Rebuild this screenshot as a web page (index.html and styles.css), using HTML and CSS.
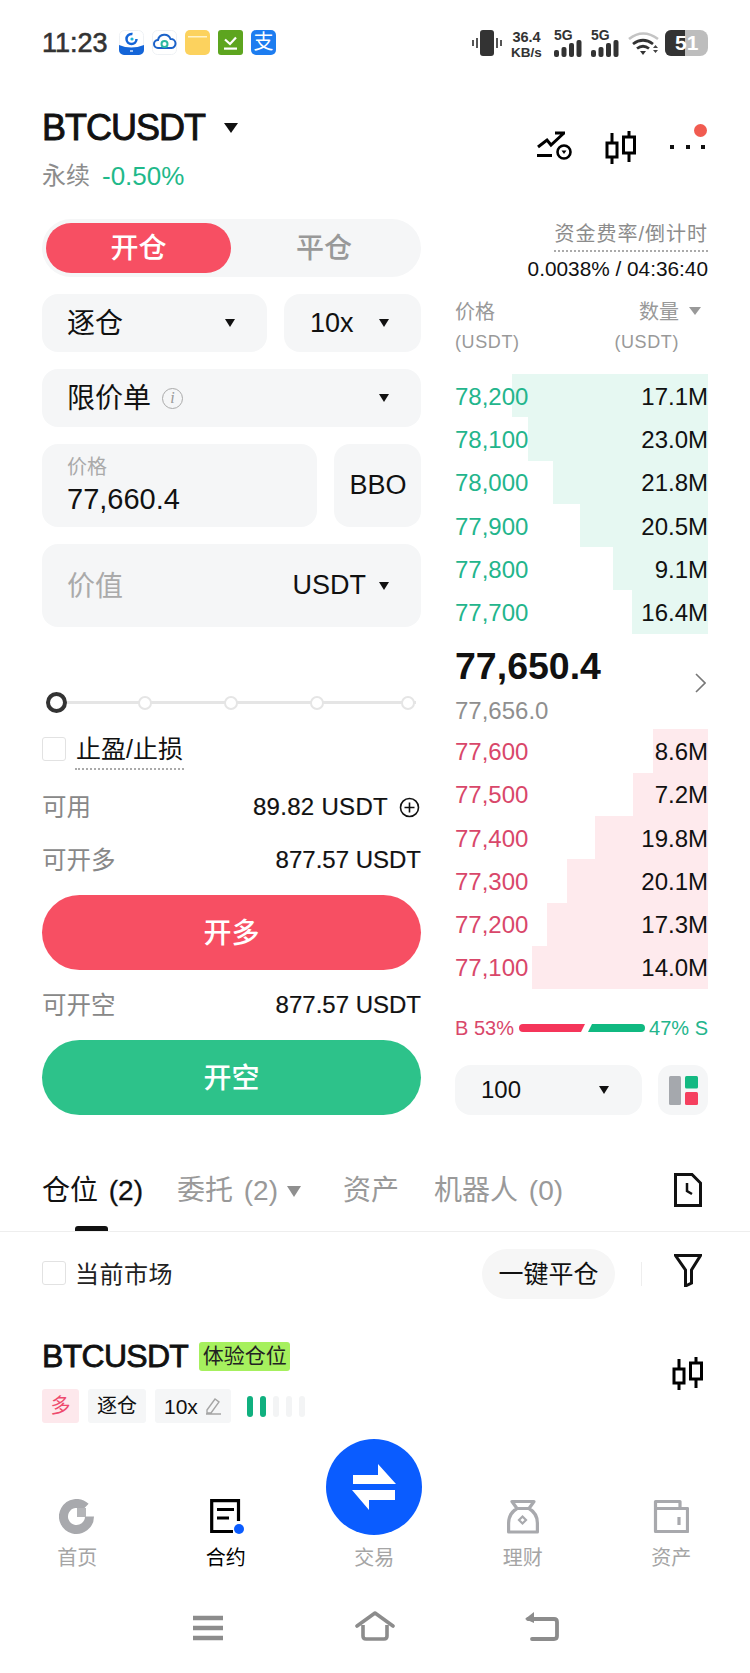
FILE: index.html
```html
<!DOCTYPE html>
<html lang="zh-CN">
<head>
<meta charset="utf-8">
<title>BTCUSDT</title>
<link rel="stylesheet" href="styles.css">
</head>
<body>
<div class="page">
  <div class="status">
    <span class="time">11:23</span>
    <div class="apps">
      <span class="app"><svg viewBox="0 0 25 25" width="25" height="25"><rect x=".5" y=".5" width="24" height="24" rx="5" fill="#fff" stroke="#eef1f4"/><path d="M0 15q12 5 25 0v5a5 5 0 0 1-5 5H5a5 5 0 0 1-5-5z" fill="#1465d8"/><circle cx="12.500" cy="9" r="5" fill="none" stroke="#1465d8" stroke-width="2.500" stroke-dasharray="24 8"/><circle cx="13" cy="9" r="1.600" fill="#1fb6d8"/><path d="M11 21h3" stroke="#cfe0fa" stroke-width="1.500"/></svg></span>
      <span class="app"><svg viewBox="0 0 25 25" width="25" height="25"><rect x=".5" y=".5" width="24" height="24" rx="5" fill="#fff" stroke="#eef1f4"/><path d="M6 18a4 4 0 0 1 0-8 6.500 6.500 0 0 1 12.500-1 4.500 4.500 0 0 1 1 9z" fill="none" stroke="#1b62c9" stroke-width="2"/><circle cx="12.500" cy="14" r="3" fill="none" stroke="#2cb9a0" stroke-width="2"/></svg></span>
      <span class="app"><svg viewBox="0 0 25 25" width="25" height="25"><rect width="25" height="25" rx="5" fill="#fcd25e"/><rect x="3" y="6" width="19" height="1.500" fill="#fff3c9"/></svg></span>
      <span class="app"><svg viewBox="0 0 25 25" width="25" height="25"><rect width="25" height="25" rx="3" fill="#5da51f"/><path d="M7 9.500l5 4.500 6-6.500" fill="none" stroke="#fff" stroke-width="2.200"/><rect x="6" y="17.500" width="13" height="2.200" fill="#fff"/></svg></span>
      <span class="app app-pay">支</span>
    </div>
    <div class="sys">
      <svg class="vib" viewBox="0 0 30 26" width="30" height="26"><rect x="8" width="14" height="26" rx="3" fill="#333"/><path d="M5 8v10M1 10v6M25 8v10M29 10v6" stroke="#555" stroke-width="2"/></svg>
      <div class="speed"><b>36.4</b><b class="unit">KB/s</b></div>
      <div class="sim"><b>5G</b><svg viewBox="0 0 28 17" width="28" height="17"><rect y="10" width="5" height="7" rx="2" fill="#333"/><rect x="7.500" y="7" width="5" height="10" rx="2" fill="#333"/><rect x="15" y="3" width="5" height="14" rx="2" fill="#333"/><rect x="22.500" width="5" height="17" rx="2" fill="#333"/></svg></div>
      <div class="sim"><b>5G</b><svg viewBox="0 0 28 17" width="28" height="17"><rect y="10" width="5" height="7" rx="2" fill="#333"/><rect x="7.500" y="7" width="5" height="10" rx="2" fill="#333"/><rect x="15" y="3" width="5" height="14" rx="2" fill="#333"/><rect x="22.500" width="5" height="17" rx="2" fill="#333"/></svg></div>
      <svg class="wifi" viewBox="0 0 31 26" width="31" height="26"><path d="M1 9q14-11 29 0" fill="none" stroke="#c4c4c4" stroke-width="2.600"/><path d="M5 14q10-7.500 20 0M9 18.500q6-4.500 12 0" fill="none" stroke="#333" stroke-width="2.800"/><path d="M12 21h6l-3 4z" fill="#333"/><path d="M25 18l2.500-3 2.500 3zM25 20l2.500 3 2.500-3z" fill="#444"/></svg>
      <div class="battery"><span class="batt-fill"></span><span class="batt-num">51</span></div>
    </div>
  </div>

  <header class="head">
    <div>
      <div class="symbol"><h1>BTCUSDT</h1><i class="caret caret-lg"></i></div>
      <div class="sub"><span class="perp">永续</span><span class="chg">-0.50%</span></div>
    </div>
    <div class="head-icons">
      <svg viewBox="0 0 35 30" width="35" height="30"><path d="M1 16l9-7 4 5L27 2M18 2h10" fill="none" stroke="#000" stroke-width="3"/><path d="M0 24.500h15" stroke="#000" stroke-width="3"/><circle cx="27" cy="21" r="6.500" fill="#fff" stroke="#000" stroke-width="2.600"/><path d="M24.500 19.500h5L27 23z" fill="#000"/></svg>
      <svg viewBox="0 0 32 34" width="32" height="34"><path d="M7 2v10M7 26v7M24 0v6M24 22v9" stroke="#000" stroke-width="3"/><rect x="2" y="12" width="10" height="14" fill="none" stroke="#000" stroke-width="3"/><rect x="18.500" y="6" width="11" height="16" fill="none" stroke="#000" stroke-width="3"/></svg>
      <div class="more"><i></i><i></i><i></i><span class="dot"></span></div>
    </div>
  </header>

  <main class="trade">
    <section class="form">
      <div class="toggle"><span class="tg on">开仓</span><span class="tg">平仓</span></div>
      <div class="split">
        <div class="field grow"><span class="cn">逐仓</span><i class="caret"></i></div>
        <div class="field lev"><span class="en">10x</span><i class="caret"></i></div>
      </div>
      <div class="field"><span class="with-info"><span class="cn">限价单</span><em class="info">i</em></span><i class="caret"></i></div>
      <div class="split">
        <div class="field tall price grow"><small>价格</small><span class="en val">77,660.4</span></div>
        <div class="field tall bbo"><span class="en">BBO</span></div>
      </div>
      <div class="field tall"><span class="ph cn">价值</span><span class="unit-sel"><span class="en">USDT</span><i class="caret"></i></span></div>

      <div class="slider">
        <i class="knob"></i><i class="stop"></i><i class="stop"></i><i class="stop"></i><i class="stop stop-end"></i>
      </div>
      <label class="tp"><i class="check"></i><span class="dotted">止盈/止损</span></label>
      <div class="line l1"><span>可用</span><b class="avail">89.82&nbsp;USDT<svg viewBox="0 0 21 21" width="21" height="21"><circle cx="10.500" cy="10.500" r="9" fill="none" stroke="#111" stroke-width="1.600"/><path d="M5.500 10.500h10M10.500 5.500v10" stroke="#111" stroke-width="1.600"/></svg></b></div>
      <div class="line l2"><span>可开多</span><b>877.57 USDT</b></div>
      <button class="cta long">开多</button>
      <div class="line l3"><span>可开空</span><b>877.57 USDT</b></div>
      <button class="cta short">开空</button>
    </section>

    <section class="book">
      <div class="fund"><span class="dotted fund-l">资金费率/倒计时</span></div>
      <div class="fund-v">0.0038% / 04:36:40</div>
      <div class="book-head">
        <div><div>价格</div><div class="usd">(USDT)</div></div>
        <div class="right"><div>数量<i class="caret caret-grey"></i></div><div class="usd usd2">(USDT)</div></div>
      </div>
      <div class="rows asks">
        <div class="row"><i class="bar" style="width:196px"></i><span class="p">78,200</span><span class="q">17.1M</span></div>
        <div class="row"><i class="bar" style="width:180px"></i><span class="p">78,100</span><span class="q">23.0M</span></div>
        <div class="row"><i class="bar" style="width:155px"></i><span class="p">78,000</span><span class="q">21.8M</span></div>
        <div class="row"><i class="bar" style="width:128px"></i><span class="p">77,900</span><span class="q">20.5M</span></div>
        <div class="row"><i class="bar" style="width:95px"></i><span class="p">77,800</span><span class="q">9.1M</span></div>
        <div class="row"><i class="bar" style="width:76px"></i><span class="p">77,700</span><span class="q">16.4M</span></div>
      </div>
      <div class="mid">
        <div class="last">77,650.4</div>
        <div class="mark">77,656.0</div>
        <svg class="chev" viewBox="0 0 11 20" width="11" height="20"><path d="M1 1l9 9-9 9" fill="none" stroke="#777" stroke-width="1.600"/></svg>
      </div>
      <div class="rows bids">
        <div class="row"><i class="bar" style="width:55px"></i><span class="p">77,600</span><span class="q">8.6M</span></div>
        <div class="row"><i class="bar" style="width:75px"></i><span class="p">77,500</span><span class="q">7.2M</span></div>
        <div class="row"><i class="bar" style="width:113px"></i><span class="p">77,400</span><span class="q">19.8M</span></div>
        <div class="row"><i class="bar" style="width:141px"></i><span class="p">77,300</span><span class="q">20.1M</span></div>
        <div class="row"><i class="bar" style="width:161px"></i><span class="p">77,200</span><span class="q">17.3M</span></div>
        <div class="row"><i class="bar" style="width:176px"></i><span class="p">77,100</span><span class="q">14.0M</span></div>
      </div>
      <div class="ratio">
        <span class="rb">B 53%</span>
        <svg viewBox="0 0 126 8" width="126" height="8"><path d="M4 0H66L62 8H4a4 4 0 0 1 0-8z" fill="#f5355a"/><path d="M73 0H122a4 4 0 0 1 0 8H69z" fill="#10b981"/></svg>
        <span class="rs">47% S</span>
      </div>
      <div class="book-foot">
        <div class="depth"><span class="en">100</span><i class="caret"></i></div>
        <div class="layout"><svg viewBox="0 0 29 29" width="29" height="29"><rect width="12" height="29" rx="1.500" fill="#a5a8ad"/><rect x="16" width="13" height="12.500" rx="1.500" fill="#14b982"/><rect x="16" y="16" width="13" height="13" rx="1.500" fill="#f5405f"/></svg></div>
      </div>
    </section>
  </main>

  <nav class="tabs">
    <span class="tab on">仓位 <b>(2)</b></span>
    <span class="tab">委托 (2)<i class="tri"></i></span>
    <span class="tab t3">资产</span>
    <span class="tab t4">机器人 (0)</span>
    <svg class="doc" viewBox="0 0 28 34" width="28" height="34"><path d="M1.500 1.500H18l8.500 8.500v22.500h-25z" fill="none" stroke="#111" stroke-width="3"/><path d="M13 10v8l5 3" fill="none" stroke="#111" stroke-width="2.500"/></svg>
  </nav>

  <div class="filter">
    <label class="cur"><i class="check"></i><span>当前市场</span></label>
    <button class="close-all">一键平仓</button>
    <i class="vline"></i>
    <svg class="funnel" viewBox="0 0 28 33" width="28" height="33"><path d="M1.500 1.500h25L17.500 16v13l-6 3V16z" fill="none" stroke="#111" stroke-width="3"/></svg>
  </div>

  <section class="pos">
    <div>
      <div class="pos-top"><h2>BTCUSDT</h2><span class="badge">体验仓位</span></div>
      <div class="tags">
        <span class="tag red">多</span>
        <span class="tag">逐仓</span>
        <span class="tag lev-tag"><span class="en">10x</span><svg viewBox="0 0 18 18" width="18" height="18"><path d="M2 17h15M3 13l8-11 4 3-8 11H3z" fill="none" stroke="#a5a5a5" stroke-width="1.400"/></svg></span>
        <span class="meter"><i class="g"></i><i class="g"></i><i></i><i></i><i></i></span>
      </div>
    </div>
    <svg class="pos-candle" viewBox="0 0 32 34" width="32" height="34"><path d="M7 2v10M7 26v7M24 0v6M24 22v9" stroke="#000" stroke-width="3"/><rect x="2" y="12" width="10" height="14" fill="none" stroke="#000" stroke-width="3"/><rect x="18.500" y="6" width="11" height="16" fill="none" stroke="#000" stroke-width="3"/></svg>
  </section>

  <nav class="tabbar">
    <div class="item">
      <svg viewBox="0 0 36 36" width="36" height="36"><path d="M26.500 8.100A13 13 0 1 0 30.500 17.500" fill="none" stroke="#a8a9ad" stroke-width="9"/><rect x="18" y="9" width="9" height="9" fill="#b4b5b8"/></svg>
      <span>首页</span>
    </div>
    <div class="item act">
      <svg viewBox="0 0 36 36" width="36" height="36"><path d="M30.500 22V1.700H3.700V32.500H25" fill="none" stroke="#000" stroke-width="3.200"/><path d="M9 10.500H26M9 19H21" stroke="#000" stroke-width="3"/><circle cx="31" cy="30" r="5" fill="#0a5cff"/></svg>
      <span>合约</span>
    </div>
    <div class="item trade-item">
      <div class="fab"><svg viewBox="0 0 46 48" width="46" height="48"><path d="M2 12H27V1L45 21H2z" fill="#fff"/><path d="M44 27V37H18V47L1 27z" fill="#fff"/></svg></div>
      <i class="spacer"></i>
      <span>交易</span>
    </div>
    <div class="item">
      <svg viewBox="0 0 36 36" width="36" height="36"><path d="M7 2.500H29L24 9.500H12zM12 9.500C6 13 3.600 18 3.600 24V33H32.400V24C32.400 18 30 13 24 9.500" fill="none" stroke="#a8a9ad" stroke-width="3.200" stroke-linejoin="round"/><path d="M17.500 17.500L21 21l-3.500 3.500L14 21z" fill="none" stroke="#a8a9ad" stroke-width="2.200"/></svg>
      <span>理财</span>
    </div>
    <div class="item">
      <svg viewBox="0 0 36 36" width="36" height="36"><path d="M2.500 32.500V2.500H27V9.500H34.500V32.500zM2.500 9.500H27" fill="none" stroke="#a8a9ad" stroke-width="3.200" stroke-linejoin="round"/><path d="M26 18v8" stroke="#a8a9ad" stroke-width="3.200"/></svg>
      <span>资产</span>
    </div>
  </nav>

  <div class="sysnav">
    <svg viewBox="0 0 32 26" width="32" height="26"><path d="M1 3h30M1 13h30M1 23h30" stroke="#8c8c8c" stroke-width="4.500"/></svg>
    <svg viewBox="0 0 40 30" width="40" height="30"><path d="M2 15L20 2l18 13" fill="none" stroke="#8c8c8c" stroke-width="3.600" stroke-linecap="round" stroke-linejoin="round"/><path d="M8 14v11q0 3 3 3h18q3 0 3-3V14" fill="none" stroke="#8c8c8c" stroke-width="3.600"/></svg>
    <svg viewBox="0 0 36 30" width="36" height="30"><path d="M4 8h26q3 0 3 3v14q0 3-3 3H8" fill="none" stroke="#8c8c8c" stroke-width="3.800" stroke-linecap="round"/><path d="M10 1L1 8l9 4z" fill="#8c8c8c"/></svg>
  </div>
</div>
</body>
</html>
```
FILE: styles.css
```css
* { box-sizing: border-box; }
html, body { margin: 0; padding: 0; background: #fff; }
body { font-family: "Liberation Sans", "Noto Sans CJK SC", sans-serif; color: #111; }
i, em { font-style: normal; }
.page { width: 750px; height: 1673px; overflow: hidden; display: flex; flex-direction: column; }
.en { font-size: 27px; }
.cn { padding-bottom: 4px; }

.status { height: 85px; padding: 30px 42px 0; display: flex; align-items: flex-start; }
.time { font-size: 27px; line-height: 26px; font-weight: 400; -webkit-text-stroke: .6px #333; color: #333; width: 77px; }
.apps { display: flex; gap: 8px; }
.app { width: 25px; height: 25px; display: block; }
.app svg { display: block; }
.app-pay { background: #1d7df0; border-radius: 5px; color: #fff; font-size: 20px; line-height: 25px; text-align: center; }
.sys { margin-left: auto; display: flex; align-items: flex-start; color: #333; }
.vib { margin-right: 8px; }
.speed { width: 33px; margin-right: 11px; display: flex; flex-direction: column; align-items: center; font-size: 14.500px; line-height: 14px; }
.speed .unit { font-size: 13.500px; margin-top: 2px; }
.sim { width: 28px; margin-right: 9px; font-size: 14px; line-height: 10px; }
.sim b { display: block; }
.sim svg { display: block; }
.wifi { margin-right: 6px; }
.battery { position: relative; width: 43px; height: 26px; background: #bdbdbd; border-radius: 6px 8px 8px 6px; overflow: hidden; }
.batt-fill { display: block; width: 20px; height: 26px; background: #333; }
.batt-num { position: absolute; left: 10px; top: 0; line-height: 26px; color: #fff; font-weight: 700; font-size: 21px; }

.head { height: 134px; padding: 0 45px 0 42px; display: flex; justify-content: space-between; }
.symbol { display: flex; align-items: center; height: 40px; margin-top: 23px; }
.symbol h1 { margin: 0; font-size: 36px; line-height: 40px; font-weight: 400; letter-spacing: -1px; -webkit-text-stroke: .9px #111; }
.caret { display: block; width: 0; height: 0; border-left: 5.500px solid transparent; border-right: 5.500px solid transparent; border-top: 8px solid #111; flex: none; }
.caret-lg { border-left-width: 7px; border-right-width: 7px; border-top-width: 10px; margin-left: 19px; }
.sub { margin-top: 13px; line-height: 30px; font-size: 24px; display: flex; gap: 12px; }
.perp { color: #8c8c8c; }
.chg { color: #1fb98a; font-size: 26px; }
.head-icons { margin-top: 46px; display: flex; gap: 33px; align-items: flex-start; height: 34px; }
.head-icons svg { display: block; }
.more { position: relative; width: 35px; height: 34px; display: flex; justify-content: space-between; padding-top: 14px; }
.more i { width: 4px; height: 4px; background: #111; }
.dot { position: absolute; right: -1.500px; top: -7.500px; width: 13px; height: 13px; border-radius: 50%; background: #f15b50; }

.trade { height: 896px; padding: 0 42px; display: flex; justify-content: space-between; }
.form { width: 379px; display: flex; flex-direction: column; }
.toggle { height: 58px; border-radius: 29px; background: #f5f6f7; padding: 4px; display: flex; font-size: 28px; font-weight: 500; color: #999; }
.tg { flex: 1; text-align: center; line-height: 52px; }
.tg.on { flex: none; width: 185px; background: #f74f63; color: #fff; border-radius: 25px; }
.split { display: flex; gap: 17px; margin-top: 17px; }
.field { min-height: 58px; margin-top: 17px; padding: 0 32px 0 25px; background: #f5f6f7; border-radius: 16px; display: flex; align-items: center; justify-content: space-between; font-size: 28px; }
.split .field { margin-top: 0; }
.grow { flex: 1; }
.lev { width: 137px; padding-left: 26px; }
.tall { min-height: 83px; }
.price { flex-direction: column; align-items: flex-start; justify-content: flex-start; padding-top: 10px; }
.price small { font-size: 20px; line-height: 26px; color: #aaa; }
.price .val { font-size: 29px; line-height: 34px; margin-top: 2px; }
.bbo { width: 87px; padding: 0 0 0 1px; justify-content: center; }
.with-info { display: flex; align-items: center; }
.info { margin-left: 11px; width: 21px; height: 21px; border: 1.600px solid #aaa; border-radius: 50%; font: italic 16px/18px "Liberation Serif", serif; color: #999; text-align: center; }
.ph { color: #aaa; }
.unit-sel { display: flex; align-items: center; gap: 13px; }

.slider { margin-top: 65px; height: 21px; margin-left: 4px; width: 370px; display: flex; align-items: center; gap: 72px; background: linear-gradient(#e5e5e5, #e5e5e5) center / 100% 3px no-repeat; }
.knob { width: 21px; height: 21px; margin-right: -1px; border: 4px solid #333; border-radius: 50%; background: #fff; }
.stop { width: 14px; height: 14px; border: 2px solid #e5e5e5; border-radius: 50%; background: #fff; }
.stop-end { margin-left: 5px; }
.tp { margin-top: 24px; height: 33px; display: flex; align-items: flex-start; gap: 9px; font-size: 25px; line-height: 24px; }
.check { display: block; width: 24px; height: 24px; border: 1.500px solid #e2e2e2; border-radius: 3px; background: #fff; flex: none; }
.dotted { border-bottom: 2px dotted #999; }
.tp .dotted { display: block; height: 33px; padding: 0 1px; border-bottom-color: #aaa; }
.line { display: flex; justify-content: space-between; align-items: center; height: 30px; font-size: 24.500px; color: #888; }
.line > span { padding-bottom: 4px; }
.line b { font-size: 24px; font-weight: 400; color: #111; display: flex; align-items: center; -webkit-text-stroke: .2px #111; }
.avail { letter-spacing: .3px; }
.line svg { margin-left: 11px; margin-right: 1px; }
.l1 { margin-top: 22px; }
.l2 { margin-top: 23px; }
.l3 { margin-top: 20px; }
.cta { display: block; width: 379px; height: 75px; margin-top: 20px; border: 0; padding: 0 0 4px; border-radius: 38px; color: #fff; font: 500 28px "Noto Sans CJK SC", sans-serif; }
.long { background: #f74f63; }
.short { background: #2dc28a; }

.book { width: 253px; display: flex; flex-direction: column; }
.fund { display: flex; justify-content: flex-end; height: 33px; }
.fund-l { display: block; height: 33px; font-size: 20px; line-height: 30px; letter-spacing: 1px; color: #8c8c8c; border-bottom-color: #aaa; }
.fund-v { margin-top: 2px; height: 30px; text-align: right; font-size: 20.800px; line-height: 30px; }
.book-head { height: 62px; margin-top: 12px; display: flex; justify-content: space-between; font-size: 20px; line-height: 31px; color: #999; }
.book-head > div > div:first-child { padding-top: 1px; height: 31px; }
.right { display: flex; flex-direction: column; align-items: flex-end; padding-right: 29px; position: relative; }
.right div:first-child { white-space: nowrap; }
.usd { font-size: 18px; letter-spacing: .6px; }
.caret-grey { position: absolute; right: 7px; top: 11px; border-left-width: 6px; border-right-width: 6px; border-top-color: #999; }
.asks { margin-top: 16px; }
.row { position: relative; height: 43.300px; padding-top: 2px; display: flex; justify-content: space-between; align-items: center; font-size: 24px; }
.bar { position: absolute; right: 0; top: 0; bottom: 0; }
.asks .bar { background: #e6f8f2; }
.bids .bar { background: #feeaed; }
.p, .q { position: relative; }
.asks .p { color: #23b58c; }
.bids .p { color: #d9476a; }
.mid { position: relative; height: 96px; }
.last { font-size: 37.500px; font-weight: 700; line-height: 42px; margin-top: 11px; }
.mark { font-size: 24px; line-height: 30px; margin-top: 9px; color: #8f8f8f; }
.chev { position: absolute; right: 2px; top: 39px; }
.ratio { margin-top: 24px; height: 30px; display: flex; align-items: center; justify-content: space-between; font-size: 20px; }
.rb { color: #d9476a; }
.rs { color: #23b58c; }
.book-foot { margin-top: 22px; display: flex; justify-content: space-between; }
.depth { width: 187px; height: 50px; border-radius: 16px; background: #f5f6f7; padding: 0 33px 0 26px; display: flex; align-items: center; justify-content: space-between; }
.depth .en { font-size: 24px; }
.layout { width: 50px; height: 50px; border-radius: 14px; background: #f5f6f7; display: flex; align-items: center; justify-content: center; }
.layout svg { display: block; }

.tabs { position: relative; height: 117px; padding: 61px 42px 0; border-bottom: 1px solid #eee; display: flex; gap: 34px; align-items: flex-start; font-size: 28px; line-height: 30px; word-spacing: 3px; color: #999; }
.tab { display: flex; gap: 7px; align-items: center; white-space: pre; }
.tab b { font-weight: 500; }
.tab.on { color: #111; gap: 0; }
.tab.on::after { content: ""; position: absolute; left: 75px; bottom: 0; width: 33px; height: 5px; border-radius: 3px 3px 0 0; background: #111; }
.tab.on b { -webkit-text-stroke: .3px #111; }
.tab:not(.on):nth-child(2) { gap: 9px; }
.tri { display: block; width: 0; height: 0; border-left: 7.500px solid transparent; border-right: 7.500px solid transparent; border-top: 11px solid #8f8f8f; }
.t3 { margin-left: 8px; }
.t4 { margin-left: 1px; }
.doc { position: absolute; right: 48px; top: 58px; }

.filter { height: 84px; padding: 0 48px 0 42px; display: flex; align-items: center; }
.cur { display: flex; align-items: center; gap: 9px; font-size: 24px; letter-spacing: .5px; color: #222; margin-top: -2px; }
.cur span { padding-bottom: 2px; }
.close-all { margin-left: auto; width: 133px; height: 50px; border: 0; padding: 0 0 4px; border-radius: 25px; background: #f6f6f6; font: 400 25px "Noto Sans CJK SC", sans-serif; color: #111; }
.vline { width: 1px; height: 24px; margin: 0 32px 0 26px; background: #eee; }
.funnel { display: block; margin-top: -8px; }

.pos { height: 107px; padding: 26px 46px 0 42px; display: flex; justify-content: space-between; align-items: flex-start; }
.pos-top { display: flex; align-items: center; gap: 11px; height: 29px; }
.pos-top h2 { margin: 0; font-size: 32px; line-height: 29px; font-weight: 400; letter-spacing: -.7px; -webkit-text-stroke: .8px #111; }
.badge { width: 91px; height: 29px; background: #a6f05e; border-radius: 3px; font-size: 21px; line-height: 28px; text-align: center; color: #222; }
.tags { margin-top: 18px; display: flex; align-items: center; gap: 9px; }
.tag { height: 34px; padding: 0 9px; background: #f5f6f7; border-radius: 3px; font-size: 20px; line-height: 33px; display: flex; align-items: center; gap: 6px; }
.tag .en { font-size: 21px; }
.tag.red { width: 37px; padding: 0; justify-content: center; background: #fde8ec; color: #ee4a6e; }
.meter { margin-left: 7px; display: flex; gap: 7px; }
.meter i { display: block; width: 6px; height: 21px; border-radius: 3px; background: #f3f4f5; }
.meter .g { background: #10b07f; }
.pos-candle { display: block; margin-top: 15px; }

.tabbar { height: 147px; padding: 76px 3px 0; display: grid; grid-template-columns: repeat(5, 148.500px); font-size: 20px; color: #a5a5a5; }
.item { position: relative; display: flex; flex-direction: column; align-items: center; }
.item svg { display: block; }
.item > span { margin-top: 12px; line-height: 22px; }
.act { color: #000; }
.spacer { display: block; height: 36px; }
.fab { position: absolute; left: 25.500px; top: -60px; width: 96px; height: 96px; border-radius: 50%; background: #0a5cff; display: flex; align-items: center; justify-content: center; }

.sysnav { padding-top: 41px; display: grid; grid-template-columns: repeat(3, 167px); justify-content: center; justify-items: center; align-items: end; }
.sysnav svg { display: block; }
```
